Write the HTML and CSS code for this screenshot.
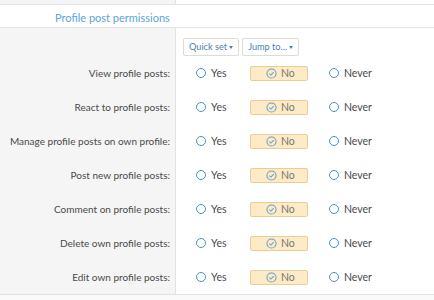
FILE: index.html
```html
<!DOCTYPE html>
<html>
<head>
<meta charset="utf-8">
<link rel="stylesheet" href="styles.css">
</head>
<body>
<div class="top"><div class="top-left"></div><div class="top-right"></div></div>
<h3 class="heading">Profile post permissions</h3>
<div class="block">
  <div class="row tools-row">
    <div class="label"></div>
    <div class="field tools">
      <button class="btn">Quick set<span class="caret"></span></button>
      <button class="btn">Jump to...<span class="caret"></span></button>
    </div>
  </div>
  <div class="row"><div class="label">View profile posts:</div><div class="field opts">
    <span class="opt yes"><i class="radio"></i>Yes</span><span class="opt no"><svg class="chk" viewBox="0 0 12 12"><circle cx="6" cy="6" r="5" /><path d="M3.6 6.1 L5.3 7.7 L8.4 4.5"/></svg>No</span><span class="opt never"><i class="radio"></i>Never</span>
  </div></div>
  <div class="row"><div class="label">React to profile posts:</div><div class="field opts">
    <span class="opt yes"><i class="radio"></i>Yes</span><span class="opt no"><svg class="chk" viewBox="0 0 12 12"><circle cx="6" cy="6" r="5" /><path d="M3.6 6.1 L5.3 7.7 L8.4 4.5"/></svg>No</span><span class="opt never"><i class="radio"></i>Never</span>
  </div></div>
  <div class="row"><div class="label">Manage profile posts on own profile:</div><div class="field opts">
    <span class="opt yes"><i class="radio"></i>Yes</span><span class="opt no"><svg class="chk" viewBox="0 0 12 12"><circle cx="6" cy="6" r="5" /><path d="M3.6 6.1 L5.3 7.7 L8.4 4.5"/></svg>No</span><span class="opt never"><i class="radio"></i>Never</span>
  </div></div>
  <div class="row"><div class="label">Post new profile posts:</div><div class="field opts">
    <span class="opt yes"><i class="radio"></i>Yes</span><span class="opt no"><svg class="chk" viewBox="0 0 12 12"><circle cx="6" cy="6" r="5" /><path d="M3.6 6.1 L5.3 7.7 L8.4 4.5"/></svg>No</span><span class="opt never"><i class="radio"></i>Never</span>
  </div></div>
  <div class="row"><div class="label">Comment on profile posts:</div><div class="field opts">
    <span class="opt yes"><i class="radio"></i>Yes</span><span class="opt no"><svg class="chk" viewBox="0 0 12 12"><circle cx="6" cy="6" r="5" /><path d="M3.6 6.1 L5.3 7.7 L8.4 4.5"/></svg>No</span><span class="opt never"><i class="radio"></i>Never</span>
  </div></div>
  <div class="row"><div class="label">Delete own profile posts:</div><div class="field opts">
    <span class="opt yes"><i class="radio"></i>Yes</span><span class="opt no"><svg class="chk" viewBox="0 0 12 12"><circle cx="6" cy="6" r="5" /><path d="M3.6 6.1 L5.3 7.7 L8.4 4.5"/></svg>No</span><span class="opt never"><i class="radio"></i>Never</span>
  </div></div>
  <div class="row"><div class="label">Edit own profile posts:</div><div class="field opts">
    <span class="opt yes"><i class="radio"></i>Yes</span><span class="opt no"><svg class="chk" viewBox="0 0 12 12"><circle cx="6" cy="6" r="5" /><path d="M3.6 6.1 L5.3 7.7 L8.4 4.5"/></svg>No</span><span class="opt never"><i class="radio"></i>Never</span>
  </div></div>
</div>
<div class="bottom"></div>
</body>
</html>
```
FILE: styles.css
```css
* { box-sizing: border-box; }
html, body { margin: 0; padding: 0; }
body {
  width: 434px;
  height: 300px;
  overflow: hidden;
  background: #fff;
  font-family: Lato, "Open Sans", sans-serif;
  font-size: 10.5px;
  color: #4a4a4a;
}
.top {
  display: flex;
  height: 5px;
  border-bottom: 1px solid #e2e2e2;
}
.top-left { width: 176px; background: #f5f5f5; border-right: 1px solid #e2e2e2; }
.top-right { flex: 1; background: #fff; }
.heading {
  margin: 0;
  height: 23px;
  padding: 5px 0 0 55px;
  font-weight: normal;
  font-size: 11px;
  color: #5aa6d6;
  border-bottom: 1px solid #e6e6e6;
  line-height: 15px;
}
.block { display: flex; flex-direction: column; }
.row { display: flex; height: 34px; }
.tools-row { height: 28px; }
.label {
  width: 176px;
  flex: none;
  background: #f5f5f5;
  border-right: 1px solid #e2e2e2;
  display: flex;
  align-items: center;
  justify-content: flex-end;
  padding-right: 5px;
  white-space: nowrap;
  font-size: 10px;
}
.field { flex: 1; display: flex; align-items: center; }
.tools { padding: 10px 0 0 7px; align-items: flex-start; gap: 3px; }
.btn {
  font-family: inherit;
  font-size: 9.2px;
  color: #4d7fae;
  background: #fff;
  border: 1px solid #dcdcdc;
  border-radius: 2px;
  height: 18px;
  padding: 0 5px;
  display: flex;
  align-items: center;
  line-height: 12px;
}
.caret {
  display: inline-block;
  margin-left: 2px;
  width: 0; height: 0;
  border-left: 2.5px solid transparent;
  border-right: 2.5px solid transparent;
  border-top: 3px solid #4d7fae;
}
.opts { padding-left: 20px; }
.opt {
  display: inline-flex;
  align-items: center;
  height: 15px;
  line-height: 14px;
}
.radio {
  display: inline-block;
  width: 10px; height: 10px;
  border: 1.3px solid #4a8fcc;
  border-radius: 50%;
  margin-right: 5px;
}
.yes { width: 54px; }
.no {
  width: 58px;
  background: #fcebc6;
  border: 1px solid #e9cd92;
  border-radius: 2px;
  padding-left: 15px;
  color: #777;
}
.chk { width: 11px; height: 11px; margin-right: 4px; fill: none; stroke: #6f9ec6; stroke-width: 1.1; }
.never { margin-left: 21px; }
.bottom {
  border-top: 1px solid #e2e2e2;
  height: 10px;
  background: #fafafa;
}
```
